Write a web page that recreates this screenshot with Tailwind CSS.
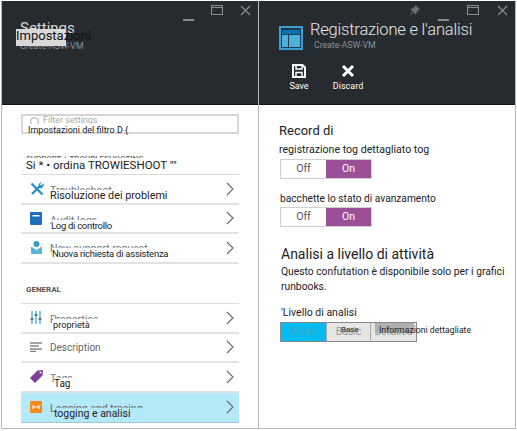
<!DOCTYPE html>
<html lang="en">
<head>
    <meta charset="UTF-8">
    <title>Registrazione e analisi</title>
    <script src="https://cdn.jsdelivr.net/npm/@tailwindcss/browser@4"></script>
</head>
<body class="bg-white overflow-hidden font-['Roboto',sans-serif]">
    <div class="w-[517px] h-[431px] flex pt-px pb-[2px] pl-px">

        <!-- Left blade: settings -->
        <section class="w-[258px] flex flex-col border-x border-b border-[#b8b8b8]">
            <header class="relative h-[104px] shrink-0 bg-[#262b30] border-b border-[#14171a]">
                <div class="flex justify-end items-start gap-[17px] pt-[4px] pr-[7px] text-[#8a8d90]">
                    <svg class="mt-[7px]" width="11" height="9" viewBox="0 0 11 9"><rect y="7" width="11" height="2" fill="currentColor"/></svg>
                    <svg width="12" height="10" viewBox="0 0 12 10"><path d="M.5.5h11v9H.5zM.5 2.500h11" fill="none" stroke="currentColor" stroke-width="1.2"/></svg>
                    <svg width="11" height="11" viewBox="0 0 11 11"><path d="M1 1l9 9M10 1l-9 9" stroke="currentColor" stroke-width="1.2"/></svg>
                </div>
                <p class="absolute left-[18px] top-[17px] text-[15px] leading-[20px] text-[#d5d6d7] whitespace-nowrap">Settings</p>
                <p class="absolute left-[18px] top-[39px] text-[9px] leading-[12px] text-[#8d9093] whitespace-nowrap">Create-ASW-VM</p>
                <div class="absolute left-[14px] top-[28px] w-[50px] h-[17px] bg-[#d9d9d9]"></div>
                <p class="absolute left-[14px] top-[25px] text-[13px] leading-[20px] text-[#111] whitespace-nowrap">Impostazioni</p>
            </header>

            <div class="flex-1 px-[19px] pt-[9px]">
                <div class="relative h-[20px] border-2 border-[#d6d6d6] flex items-center pl-[7px] gap-[4px]">
                    <span class="w-[9px] h-[9px] rounded-full border border-[#aaa] -mt-[5px]"></span>
                    <span class="text-[9px] text-[#aaa] -mt-[6px]">Filter settings</span>
                    <div class="absolute left-0 right-0 top-[8px] bottom-0 bg-white pl-[5px] text-[9px] leading-[12px] text-[#222] whitespace-nowrap">Impostazioni del filtro D {</div>
                </div>

                <div class="relative h-[40px]">
                    <p class="absolute left-[5px] top-[20px] text-[8px] font-medium leading-[10px] text-[#666] whitespace-nowrap">SUPPORT + TROUBLESHOOTING</p>
                    <div class="absolute left-0 right-0 top-[24px] bottom-0 bg-white pl-[5px] text-[11.5px] leading-[14px] text-[#222] whitespace-nowrap">Si * • ordina TROWIESHOOT ""</div>
                </div>

                <ul class="border-t border-[#dcdcdc]">
                    <li class="relative h-[29.5px] border-b-2 border-[#e2e2e2] flex items-center">
                        <svg class="ml-[9px]" width="14" height="14" viewBox="0 0 14 14"><path d="M1.500 1.500l11 11" stroke="#2f8fcb" stroke-width="2.400"/><path d="M2 12L10 4" stroke="#2f8fcb" stroke-width="2.400"/><path d="M13.500 1.500l-2.500 2-1-1 2-2.500a4 4 0 0 0-3.500 4.500l2 2a4 4 0 0 0 3-5z" fill="#2f8fcb"/></svg>
                        <span class="absolute left-[29px] top-[10px] text-[10.5px] leading-[12px] text-[#777]">Troubleshoot</span>
                        <div class="absolute left-[29px] right-[18px] top-[15px] bottom-0 bg-white text-[10.8px] leading-[12px] text-[#222] whitespace-nowrap">Risoluzione dei problemi</div>
                        <svg class="ml-auto mr-[5px]" width="8" height="14" viewBox="0 0 8 14"><path d="M1 1l6 6-6 6" fill="none" stroke="#666" stroke-width="1.1"/></svg>
                    </li>
                    <li class="relative h-[29.5px] border-b-2 border-[#e2e2e2] flex items-center">
                        <svg class="ml-[9px]" width="12" height="13" viewBox="0 0 12 13"><path d="M1 0h10a1 1 0 0 1 1 1v11a1 1 0 0 1-1 1H1a1 1 0 0 1-1-1V1a1 1 0 0 1 1-1z" fill="#1f6fbf"/><rect x="2.500" y="3" width="7" height="1.500" fill="#fff"/></svg>
                        <span class="absolute left-[29px] top-[10px] text-[10.5px] leading-[12px] text-[#777]">Audit logs</span>
                        <div class="absolute left-[30px] right-[18px] top-[15px] bottom-0 bg-white text-[9.5px] tracking-[-0.3px] leading-[12px] text-[#222] whitespace-nowrap">Log di controllo</div>
                        <svg class="ml-auto mr-[5px]" width="8" height="14" viewBox="0 0 8 14"><path d="M1 1l6 6-6 6" fill="none" stroke="#666" stroke-width="1.1"/></svg>
                    </li>
                    <li class="relative h-[29.5px] border-b-2 border-[#e2e2e2] flex items-center">
                        <svg class="ml-[10px]" width="11" height="13" viewBox="0 0 11 13"><rect y="6" width="11" height="7" fill="#59b4d9"/><path d="M5.500 9L1 6h9z" fill="#fff"/><circle cx="5.500" cy="3" r="3" fill="#3999c6"/></svg>
                        <span class="absolute left-[29px] top-[9px] text-[10.5px] leading-[12px] text-[#777]">New support request</span>
                        <div class="absolute left-[31px] right-[18px] top-[14px] bottom-0 bg-white text-[9.5px] tracking-[-0.25px] leading-[12px] text-[#222] whitespace-nowrap">Nuova richiesta di assistenza</div>
                        <svg class="ml-auto mr-[5px]" width="8" height="14" viewBox="0 0 8 14"><path d="M1 1l6 6-6 6" fill="none" stroke="#666" stroke-width="1.1"/></svg>
                    </li>
                </ul>

                <p class="pl-[5px] pt-[20px] pb-[8.5px] text-[8px] leading-[11px] font-bold text-[#555]">GENERAL</p>

                <ul class="border-t border-[#dcdcdc]">
                    <li class="relative h-[29.5px] border-b-2 border-[#e2e2e2] flex items-center">
                        <svg class="ml-[9px]" width="12" height="13" viewBox="0 0 12 13"><path d="M2 0v13M6 0v13M10 0v13" stroke="#59b4d9" stroke-width="1.500"/><path d="M.5 8h3M4.500 4h3M8.500 8h3" stroke="#555" stroke-width="1.500"/></svg>
                        <span class="absolute left-[29px] top-[10px] text-[10.5px] leading-[12px] text-[#777]">Properties</span>
                        <div class="absolute left-[32px] right-[18px] top-[15px] bottom-0 bg-white text-[9.2px] leading-[12px] text-[#222] whitespace-nowrap">proprietà</div>
                        <svg class="ml-auto mr-[5px]" width="8" height="14" viewBox="0 0 8 14"><path d="M1 1l6 6-6 6" fill="none" stroke="#666" stroke-width="1.1"/></svg>
                    </li>
                    <li class="relative h-[29.5px] border-b-2 border-[#e2e2e2] flex items-center">
                        <svg class="ml-[9px]" width="12" height="10" viewBox="0 0 12 10"><path d="M0 1h12M0 4h9M0 7h12M0 9.500h6" stroke="#888" stroke-width="1.500"/></svg>
                        <span class="ml-[8px] text-[10px] text-[#666]">Description</span>
                        <svg class="ml-auto mr-[5px]" width="8" height="14" viewBox="0 0 8 14"><path d="M1 1l6 6-6 6" fill="none" stroke="#666" stroke-width="1.1"/></svg>
                    </li>
                    <li class="relative h-[29.5px] border-b-2 border-[#e2e2e2] flex items-center">
                        <svg class="ml-[9px]" width="13" height="13" viewBox="0 0 13 13"><path d="M0 8L7.500 .5 13 0l-.5 5.500L5 13z" fill="#7e3f9d"/><circle cx="10.500" cy="2.500" r="1" fill="#fff"/></svg>
                        <span class="absolute left-[29px] top-[10px] text-[10.5px] leading-[12px] text-[#777]">Tags</span>
                        <div class="absolute left-[33px] right-[18px] top-[15px] bottom-0 bg-white text-[10px] leading-[12px] text-[#222]">Tag</div>
                        <svg class="ml-auto mr-[5px]" width="8" height="14" viewBox="0 0 8 14"><path d="M1 1l6 6-6 6" fill="none" stroke="#666" stroke-width="1.1"/></svg>
                    </li>
                    <li class="relative h-[30px] bg-[#b4e9fa] border-b border-[#9fc9d6] flex items-center">
                        <svg class="ml-[9px]" width="12" height="12" viewBox="0 0 12 12"><rect width="12" height="12" fill="#f58a1f"/><path d="M3 4v4M9 4v4M3 6h6" stroke="#fff" stroke-width="1"/></svg>
                        <span class="absolute left-[29px] top-[10px] text-[10.5px] leading-[12px] text-[#666]">Logging and tracing</span>
                        <div class="absolute left-[33px] right-[18px] top-[15px] bottom-0 bg-[#b4e9fa] text-[10.5px] leading-[12px] text-[#222] whitespace-nowrap">togging e analisi</div>
                        <svg class="ml-auto mr-[5px]" width="8" height="14" viewBox="0 0 8 14"><path d="M1 1l6 6-6 6" fill="none" stroke="#666" stroke-width="1.1"/></svg>
                    </li>
                </ul>
            </div>
        </section>

        <!-- Right blade: logging and tracing -->
        <section class="w-[257px] flex flex-col border-r border-b border-[#b8b8b8]">
            <header class="relative h-[104px] shrink-0 bg-[#262b30] border-b border-[#14171a] flex flex-col">
                <div class="absolute right-[7px] top-[4px] flex items-start gap-[18px] text-[#8a8d90]">
                    <svg class="text-[#6b6e71]" width="11" height="11" viewBox="0 0 11 11"><path d="M6.500 0L11 4.500 9.500 5 7.500 7.500 7 10 1 4l2.500-.5L6 1.500zM3 7l-3 4 4-3z" fill="currentColor"/></svg>
                    <svg class="mt-[7px]" width="11" height="9" viewBox="0 0 11 9"><rect y="7" width="11" height="2" fill="currentColor"/></svg>
                    <svg width="12" height="10" viewBox="0 0 12 10"><path d="M.5.5h11v9H.5zM.5 2.500h11" fill="none" stroke="currentColor" stroke-width="1.2"/></svg>
                    <svg width="11" height="11" viewBox="0 0 11 11"><path d="M1 1l9 9M10 1l-9 9" stroke="currentColor" stroke-width="1.2"/></svg>
                </div>
                <div class="flex h-[49px] pl-[20px] pt-[25px] gap-[7px]">
                    <svg class="shrink-0" width="24" height="24" viewBox="0 0 24 24"><rect width="24" height="24" fill="#3c9fd0"/><rect x="2" y="2" width="20" height="20" fill="#1d3a4e"/><rect x="3" y="4" width="18" height="4" fill="#0e72b0"/><rect x="3" y="9" width="6" height="12" fill="#4fb0dc"/><rect x="10" y="9" width="11" height="12" fill="#4fb0dc"/></svg>
                    <div class="-mt-[8px]">
                        <p class="text-[16.5px] tracking-[-0.2px] leading-[24px] font-light text-[#e6e7e8] whitespace-nowrap">Registrazione e l'analisi</p>
                        <p class="pl-[4px] -mt-[2px] text-[8.7px] leading-[11px] text-[#8d9093]">Create-ASW-VM</p>
                    </div>
                </div>
                <div class="flex pl-[28px] pt-[14px] gap-[22px] text-white text-[9px] leading-[10px] text-center">
                    <div class="w-[24px] flex flex-col items-center gap-[3px]">
                        <svg width="14" height="14" viewBox="0 0 14 14"><path d="M1 1h9.500L13 3.500V13H1z" fill="none" stroke="#fff" stroke-width="2"/><path d="M4 1v4h6V1M4 13V8.500h6V13" fill="none" stroke="#fff" stroke-width="1.500"/></svg>
                        <span>Save</span>
                    </div>
                    <div class="w-[30px] flex flex-col items-center gap-[3px]">
                        <svg width="14" height="14" viewBox="0 0 14 14"><path d="M2 2l10 10M12 2L2 12" stroke="#fff" stroke-width="3"/></svg>
                        <span>Discard</span>
                    </div>
                </div>
            </header>

            <div class="flex-1 pl-[20px] pt-[16px] pr-[6px] text-[#222]">
                <h2 class="text-[13px] leading-[20px]">Record di</h2>
                <p class="mt-px text-[10.6px] leading-[15px] whitespace-nowrap">registrazione tog dettagliato tog</p>
                <div class="mt-[2px] ml-px w-[92px] h-[20px] flex text-[10.5px] border border-[#d0d0d0]">
                    <span class="w-[45px] flex items-center justify-center text-[#555]">Off</span>
                    <span class="flex-1 flex items-center justify-center bg-[#9b4f96] text-white">On</span>
                </div>
                <p class="mt-[12px] pl-px text-[10.2px] leading-[15px] whitespace-nowrap">bacchette lo stato di avanzamento</p>
                <div class="mt-px ml-px w-[92px] h-[20px] flex text-[10.5px] border border-[#d0d0d0]">
                    <span class="w-[45px] flex items-center justify-center text-[#555]">Off</span>
                    <span class="flex-1 flex items-center justify-center bg-[#9b4f96] text-white">On</span>
                </div>
                <h2 class="mt-[17px] pl-[2px] text-[14px] leading-[20px] whitespace-nowrap">Analisi a livello di attività</h2>
                <p class="pl-[2px] text-[10.3px] leading-[15px]">Questo confutation è disponibile solo per i grafici runbooks.</p>
                <p class="mt-[11px] pl-[2px] text-[10.5px] leading-[15px]">'Livello di analisi</p>
                <div class="relative mt-[2px] ml-px w-[137px] h-[20px] flex text-[10.5px] border border-[#8a8a8a] text-[#999]">
                    <span class="w-[45px] flex items-center justify-center bg-[#00bcf2] text-[#4aa3c2]">None</span>
                    <span class="w-[45px] flex items-center justify-center bg-[#e6e6e6] border-x border-[#aaa]">Basic</span>
                    <span class="flex-1 flex items-center justify-center bg-[#e6e6e6]">Detailed</span>
                    <span class="absolute left-[60px] top-px text-[8px] leading-[11px] text-[#222]">Base</span>
                    <span class="absolute left-[94px] top-0 w-[39px] h-[10px] bg-[#b0b0b0]"></span>
                    <span class="absolute left-[98px] top-0 text-[8.7px] leading-[14px] text-[#222] whitespace-nowrap">Informazioni dettagliate</span>
                </div>
            </div>
        </section>
    </div>
</body>
</html>
